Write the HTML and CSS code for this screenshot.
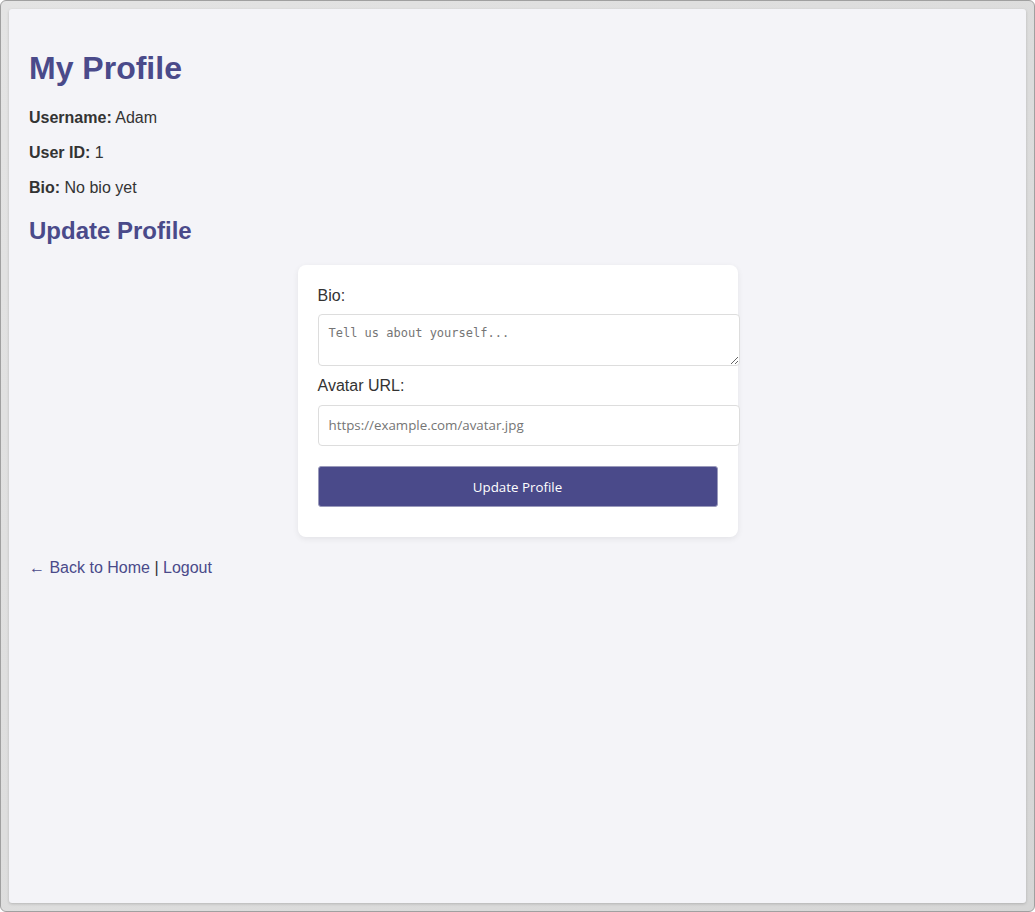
FILE: index.html
```html
<!DOCTYPE html>
<html>
<head>
<meta charset="utf-8">
<title>My Profile</title>
<link rel="stylesheet" href="styles.css">
</head>
<body>
<div class="frame">
  <div class="page">
    <h1 class="title">My Profile</h1>
    <p class="info"><strong>Username:</strong> Adam</p>
    <p class="info"><strong>User ID:</strong> 1</p>
    <p class="info"><strong>Bio:</strong> No bio yet</p>
    <h2 class="subtitle">Update Profile</h2>
    <form class="card">
      <label class="field-label" for="bio">Bio:</label>
      <textarea class="bio-input" id="bio" rows="2" placeholder="Tell us about yourself..."></textarea>
      <label class="field-label second" for="avatar">Avatar URL:</label>
      <input class="url-input" id="avatar" type="text" placeholder="https://example.com/avatar.jpg">
      <button class="submit" type="button">Update Profile</button>
    </form>
    <p class="nav"><a class="link" href="#">← Back to Home</a> | <a class="link" href="#">Logout</a></p>
  </div>
</div>
</body>
</html>
```
FILE: styles.css
```css
html, body {
  margin: 0;
  padding: 0;
  background: #ffffff;
}

.frame {
  box-sizing: border-box;
  width: 1035px;
  height: 912px;
  border: 1px solid #a0a0a0;
  border-radius: 6px;
  background: linear-gradient(135deg, #e4e4e4, #d6d6d6);
  padding: 8px;
}

.page {
  box-sizing: border-box;
  height: 100%;
  background: #f4f4f8;
  border-radius: 3px;
  box-shadow: 0 1px 3px rgba(0, 0, 0, 0.18);
  padding: 20px;
  font-family: "Liberation Sans", Arial, sans-serif;
  font-size: 16px;
  line-height: 1.2;
  color: #333333;
  display: flow-root;
}

.title {
  font-size: 32px;
  line-height: normal;
  font-weight: bold;
  color: #4a4a8a;
  margin: 21px 0;
}

.info {
  margin: 16px 0;
}

.subtitle {
  font-size: 24px;
  line-height: normal;
  font-weight: bold;
  color: #4a4a8a;
  margin: 19px 0 20px;
}

.card {
  display: block;
  max-width: 400px;
  margin: 0 auto;
  background: #ffffff;
  border-radius: 8px;
  box-shadow: 0 2px 6px rgba(0, 0, 0, 0.07);
  padding: 21px 20px 30px;
}

.field-label {
  display: block;
  margin-bottom: 9px;
}

.field-label.second {
  margin-top: 10px;
  margin-bottom: 10px;
}

.bio-input,
.url-input {
  display: block;
  width: 100%;
  padding: 10px;
  border: 1px solid #dddddd;
  border-radius: 4px;
  background: #ffffff;
  margin: 0;
}

.bio-input {
  font-family: "DejaVu Sans Mono", monospace;
  font-size: 12px;
  height: 30px;
  line-height: 16px;
}

.url-input {
  font-family: "Open Sans", sans-serif;
  font-size: 13.33px;
  height: 19px;
  line-height: 19px;
}

.bio-input::placeholder,
.url-input::placeholder {
  color: #757575;
}

.submit {
  display: block;
  box-sizing: border-box;
  width: 100%;
  height: 41px;
  margin-top: 20px;
  padding: 2px 0 0;
  background: #4a4a8a;
  color: #ffffff;
  border: 1px solid #9a9abb;
  border-radius: 3px;
  font-family: "Open Sans", sans-serif;
  font-size: 13.33px;
}

.nav {
  margin: 21px 0 0;
}

.link {
  color: #4a4a8a;
  text-decoration: none;
}
```
